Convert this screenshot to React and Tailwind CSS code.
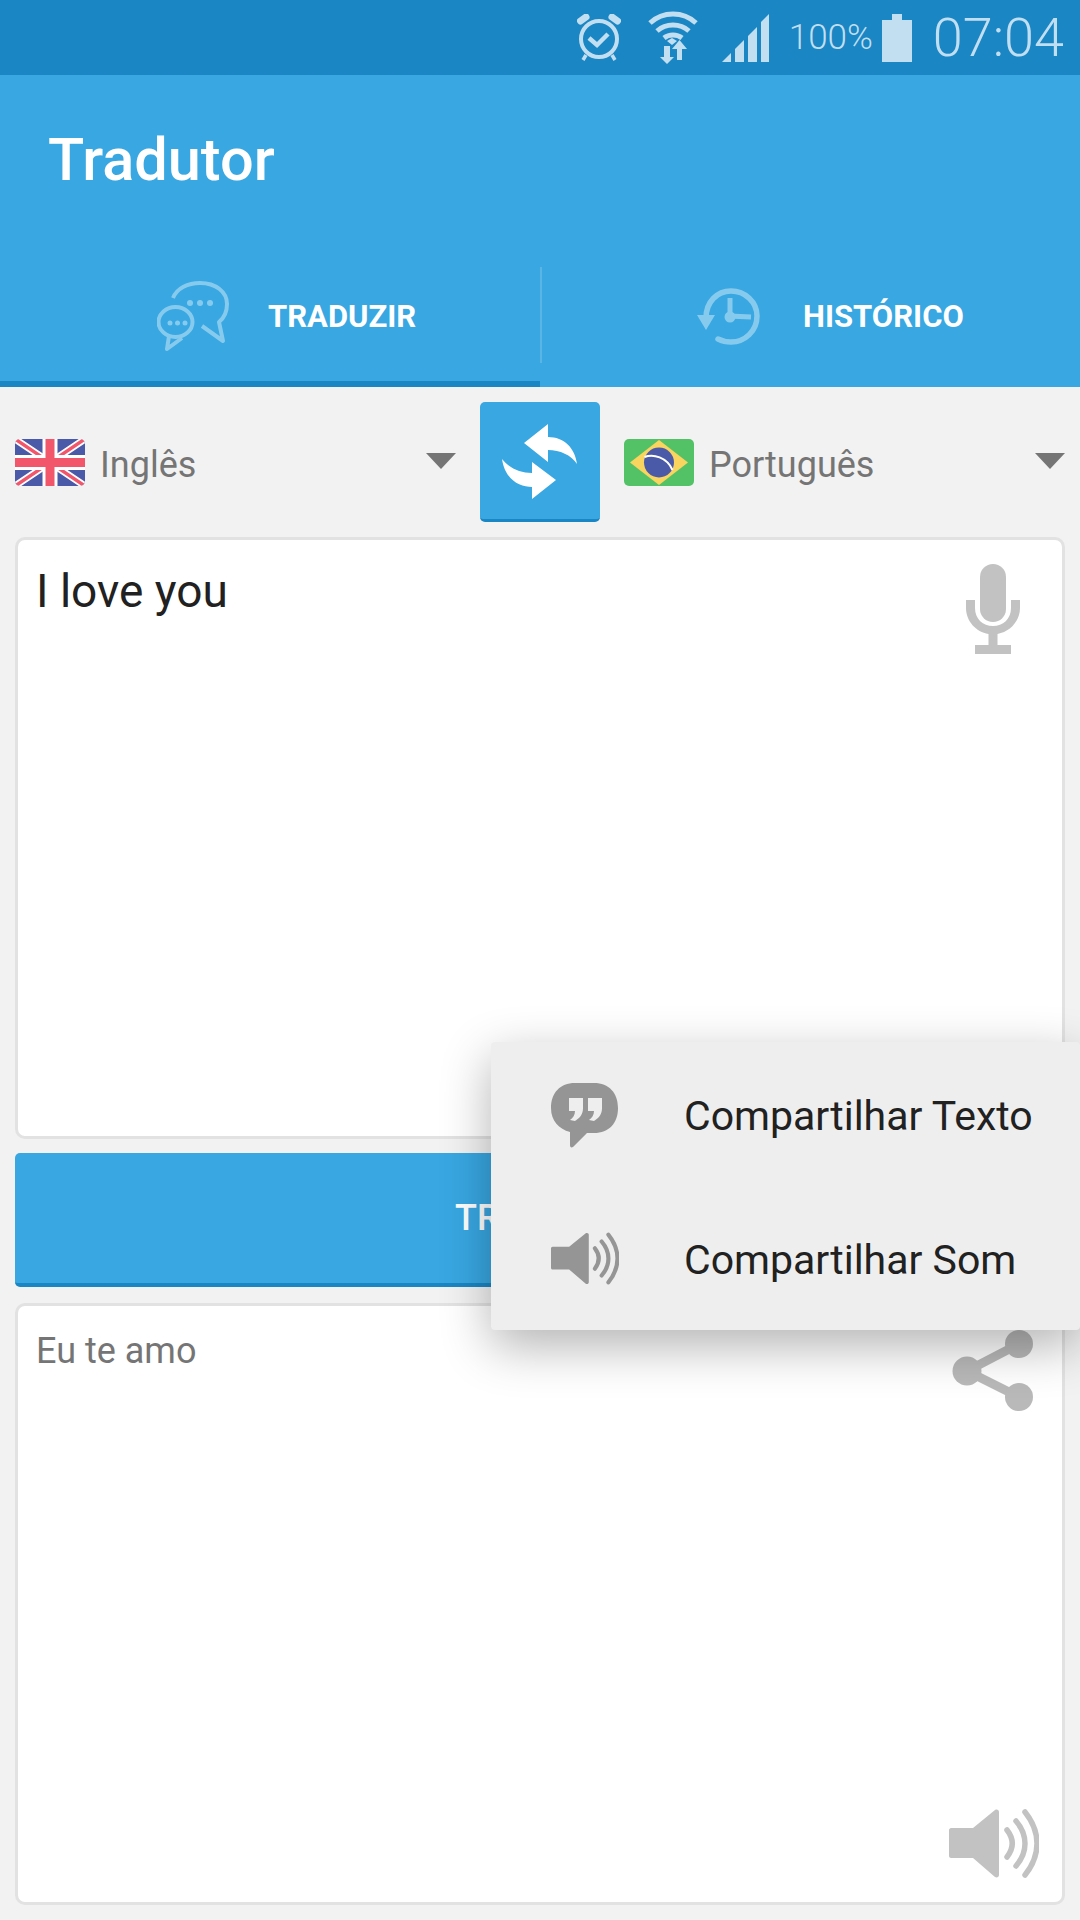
import React from "react";

function Alarm() {
  return (
    <svg width="44" height="48" viewBox="0 0 44 48" className="mr-[27px]" fill="none" stroke="#c1dff0">
      <circle cx="22" cy="25" r="18" strokeWidth="4" />
      <path d="M12 24l8 7 11-11" strokeWidth="4.5" />
      <path d="M3.5 7L9 3M40.5 7L35 3" strokeWidth="7" strokeLinecap="round" />
      <path d="M9 41l-3 5M35 41l3 5" strokeWidth="3.5" />
    </svg>
  );
}
function Wifi() {
  return (
    <svg width="50" height="54" viewBox="0 0 50 54" className="mr-[24px]" fill="none" stroke="#c1dff0">
      <path d="M2 12C15 0 35 0 48 12" strokeWidth="5" />
      <path d="M9 20C18 12 32 12 41 20" strokeWidth="5" />
      <path d="M16 27C21 23 29 23 34 27" strokeWidth="5" />
      <path d="M19 30L24 27L29 30L24 34Z" fill="#c1dff0" stroke="none" />
      <path d="M16 35H22V46H26L19 53L12 46H16Z" fill="#c1dff0" stroke="none" />
      <path d="M29 49V38H24L31.5 29L39 38H34V49Z" fill="#c1dff0" stroke="none" />
    </svg>
  );
}
function Signal() {
  return (
    <svg width="47" height="48" viewBox="0 0 47 48" className="mr-[20px]" fill="#c1dff0">
      <path d="M0 48L9 39V48Z" />
      <path d="M13 35L22 26V48H13Z" />
      <path d="M26 22L35 13V48H26Z" />
      <path d="M39 8L47 0V48H39Z" />
    </svg>
  );
}
function Battery() {
  return (
    <svg width="30" height="48" viewBox="0 0 30 48" className="ml-[9px] mr-[21px]" fill="#c1dff0">
      <path d="M10 0H20V6H30V48H0V6H10Z" />
    </svg>
  );
}
function Chat() {
  return (
    <svg width="72" height="70" viewBox="0 0 72 70" className="mr-[39px]" fill="none" stroke="#86cbee" strokeWidth="4" strokeLinejoin="round">
      <path d="M16 17C20 7 31 2 43 2C59 2 70 11 70 23C70 31 67 37 62 41L66 60L45 45" />
      <ellipse cx="18.5" cy="41" rx="17" ry="15" />
      <path d="M12 55L10 68L25 57" />
      <g fill="#86cbee" stroke="none">
        <circle cx="33" cy="22" r="3" />
        <circle cx="43" cy="22" r="3" />
        <circle cx="53" cy="22" r="3" />
        <circle cx="13" cy="42" r="2.5" />
        <circle cx="20.5" cy="42" r="2.5" />
        <circle cx="28" cy="42" r="2.5" />
      </g>
    </svg>
  );
}
function History() {
  return (
    <svg width="63" height="57" viewBox="0 0 63 57" className="mr-[43px]" fill="none" stroke="#86cbee">
      <path d="M9 30C9 14 20 3 34 3C48 3 60 14 60 28C60 43 48 54 34 54C29 54 25 53 21 51" strokeWidth="5.5" strokeLinecap="round" />
      <path d="M0 27H18L9 42Z" fill="#86cbee" stroke="none" />
      <path d="M33 10V28L54 29" strokeWidth="5" />
      <circle cx="33" cy="29" r="5.5" fill="#86cbee" stroke="none" />
    </svg>
  );
}
function UK() {
  return (
    <svg width="70" height="47" viewBox="0 0 70 47" className="shrink-0 rounded-[5px]">
      <rect width="70" height="47" fill="#4a5aa8" />
      <path d="M0 0L70 47M70 0L0 47" stroke="#ffffff" strokeWidth="7" />
      <path d="M0 0L70 47M70 0L0 47" stroke="#f2566a" strokeWidth="3.5" />
      <path d="M35 0V47M0 23.5H70" stroke="#ffffff" strokeWidth="15" />
      <path d="M35 0V47M0 23.5H70" stroke="#f2566a" strokeWidth="9" />
    </svg>
  );
}
function Brazil() {
  return (
    <svg width="70" height="47" viewBox="0 0 70 47" className="shrink-0 rounded-[5px]">
      <rect width="70" height="47" fill="#53c267" />
      <path d="M35 1L64 23.5L35 46L6 23.5Z" fill="#f9d45f" />
      <circle cx="35" cy="23.5" r="15" fill="#4a5aa8" />
      <path d="M20.5 18C29 14.5 43 18 48.5 31" fill="none" stroke="#ffffff" strokeWidth="2" />
    </svg>
  );
}
function Caret() {
  return (
    <svg width="30" height="16" viewBox="0 0 30 16" className="shrink-0" fill="#757575">
      <path d="M0 0H30L15 16Z" />
    </svg>
  );
}
function SwapArrows() {
  return (
    <svg width="120" height="117" viewBox="0 0 120 117" fill="#ffffff">
      <path d="M68 22L44 41L68 60V48C80 48 91 53 97 62C95 46 84 35 68 35Z" />
      <path d="M52 60L76 78L52 97V85C40 85 25 78 22 57C29 66 40 71 52 71Z" />
    </svg>
  );
}
function Mic() {
  return (
    <svg width="54" height="90" viewBox="0 0 54 90" fill="#c2c2c2">
      <rect x="14" y="0" width="26" height="58" rx="13" />
      <path d="M0 36H9V44C9 55 17 62 27 62C37 62 45 55 45 44V36H54V44C54 57 44 68 31.5 70V81H45V90H9V81H22.5V70C10 68 0 57 0 44Z" />
    </svg>
  );
}
function Speaker({ w, h, color }) {
  return (
    <svg width={w} height={h} viewBox="0 0 90 69" fill="none" stroke={color}>
      <path d="M2 19H24L46 1C48 0 50 1 50 3V66C50 68 48 69 46 68L24 49H2C1 49 0 48 0 47V21C0 20 1 19 2 19Z" fill={color} stroke="none" />
      <path d="M58 21C65 30 65 39 58 48" strokeWidth="5.5" strokeLinecap="round" />
      <path d="M67 12C79 26 79 43 67 57" strokeWidth="5.5" strokeLinecap="round" />
      <path d="M76 3C92 23 92 46 76 66" strokeWidth="5.5" strokeLinecap="round" />
    </svg>
  );
}
function Share() {
  return (
    <svg width="81" height="81" viewBox="0 0 81 81" fill="#b9b9b9" stroke="#b9b9b9">
      <path d="M15 41L67 14M15 41L67 67" strokeWidth="9" fill="none" />
      <circle cx="15" cy="41" r="14.5" stroke="none" />
      <circle cx="67" cy="14" r="14" stroke="none" />
      <circle cx="67" cy="67" r="14" stroke="none" />
    </svg>
  );
}
function Quote() {
  return (
    <svg width="67" height="65" viewBox="0 0 67 65" fill="#959595">
      <path fillRule="evenodd" d="M24 0H43C58 0 67 10 67 25C67 40 58 50 43 50H36L22 64C20 65 19 64 19 62V49C8 46 0 38 0 25C0 10 9 0 24 0ZM18 15V28H24C24 32 22 35 19 37L24 38C29 35 32 31 32 25V15ZM37 15V28H43C43 32 41 35 38 37L43 38C48 35 51 31 51 25V15Z" />
    </svg>
  );
}

function Lang({ flag, label, className }) {
  return (
    <div className={`flex items-center ${className}`}>
      {flag}
      <span className="ml-[15px] flex-1 pt-[5px] text-[36px] leading-none text-[#757575]">{label}</span>
      <div className="mb-[3px]"><Caret /></div>
    </div>
  );
}

export default function App() {
  return (
    <div className="relative flex h-[1920px] w-[1080px] flex-col overflow-hidden bg-[#f2f2f2] font-['Roboto',sans-serif]">
      <div className="flex h-[75px] items-center justify-end bg-[#1a86c4] text-[#c1dff0]">
        <Alarm />
        <Wifi />
        <Signal />
        <span className="text-[35px] font-light leading-none">100%</span>
        <Battery />
        <span className="pr-[16px] text-[54px] font-light leading-none">07:04</span>
      </div>

      <div className="flex h-[312px] flex-col bg-[#38a7e2]">
        <div className="flex h-[192px] items-center pl-[48px] pb-[20px] text-[59.5px] font-medium leading-none text-white">Tradutor</div>
        <div className="relative flex h-[120px]">
          <div className="flex w-[540px] items-center border-b-[6px] border-[#1a86c4] pb-[16px] pl-[157px]">
            <Chat />
            <span className="text-[31px] font-bold leading-none text-white">TRADUZIR</span>
          </div>
          <div className="mb-[24px] w-[2px] bg-[#59b5e6]" />
          <div className="flex flex-1 items-center pb-[22px] pl-[155px]">
            <History />
            <span className="text-[31px] font-bold leading-none text-white">HISTÓRICO</span>
          </div>
        </div>
      </div>

      <div className="flex h-[150px] items-center py-[15px] pl-[15px] pr-[15px]">
        <Lang flag={<UK />} label="Inglês" className="w-[441px]" />
        <div className="ml-[24px] mr-[24px] flex h-[120px] w-[120px] shrink-0 items-center justify-center overflow-hidden rounded-[5px] border-b-[3px] border-[#1a86c4] bg-[#38a7e2]">
          <SwapArrows />
        </div>
        <Lang flag={<Brazil />} label="Português" className="flex-1" />
      </div>

      <div className="relative mx-[15px] h-[602px] rounded-[10px] border-[3px] border-[#e2e2e2] bg-white px-[18px] pt-[26px] text-[46px] leading-[50px] text-[#212121]">
        I love you
        <div className="absolute right-[42px] top-[24px]"><Mic /></div>
      </div>

      <div className="mx-[15px] mt-[14px] flex h-[134px] items-center justify-center rounded-[5px] border-b-[4px] border-[#1a86c4] bg-[#38a7e2] text-[36px] font-medium leading-none text-white">
        TRADUZIR
      </div>

      <div className="relative mx-[15px] mt-[16px] h-[602px] rounded-[10px] border-[3px] border-[#e2e2e2] bg-white px-[18px] pt-[25px] text-[36px] leading-[40px] text-[#757575]">
        Eu te amo
        <div className="absolute right-[29px] top-[24px]"><Share /></div>
        <div className="absolute bottom-[24px] right-[23px]"><Speaker w={90} h={69} color="#c2c2c2" /></div>
      </div>

      <div className="absolute left-[491px] top-[1042px] flex h-[288px] w-[589px] flex-col rounded-[4px] bg-[#eeeeee] shadow-[0_16px_50px_rgba(0,0,0,0.3)]">
        <div className="flex h-[144px] items-center pl-[60px] text-[41px] leading-none text-[#212121]">
          <div className="w-[133px] shrink-0 pt-[3px]"><Quote /></div>
          <span className="pt-[5px]">Compartilhar Texto</span>
        </div>
        <div className="flex h-[144px] items-center pl-[60px] text-[41px] leading-none text-[#212121]">
          <div className="w-[133px] shrink-0"><Speaker w={68} h={53} color="#959595" /></div>
          <span className="pt-[5px]">Compartilhar Som</span>
        </div>
      </div>
    </div>
  );
}
